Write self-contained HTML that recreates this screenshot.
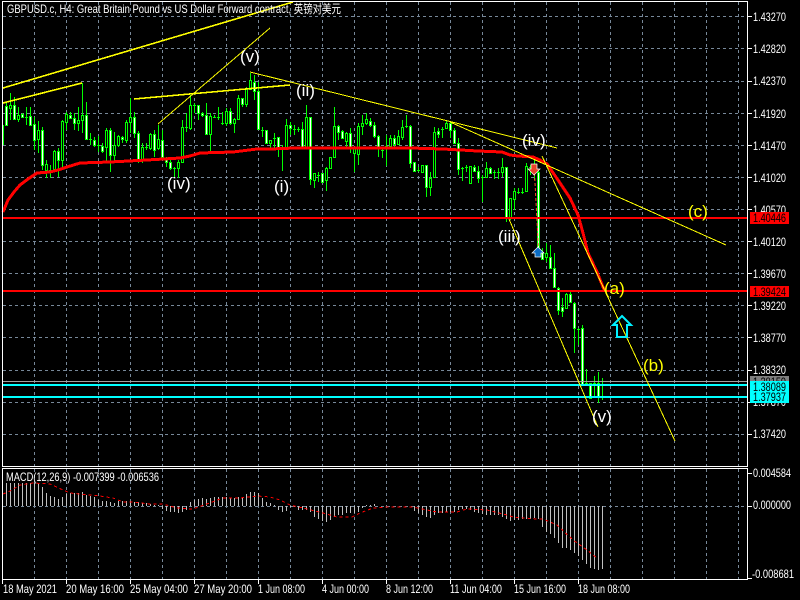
<!DOCTYPE html>
<html><head><meta charset="utf-8"><title>GBPUSD.c, H4</title>
<style>
html,body{margin:0;padding:0;background:#000;width:800px;height:600px;overflow:hidden}
svg{display:block}
text{font-family:"Liberation Sans","Noto Sans CJK SC",sans-serif;font-size:12px;fill:#fff}
.w{font-size:17px}
</style></head><body>
<svg width="800" height="600" viewBox="0 0 800 600" xmlns="http://www.w3.org/2000/svg">
<rect width="800" height="600" fill="#000"/>
<!-- grid -->
<path shape-rendering="crispEdges" stroke="#778899" stroke-width="1" stroke-dasharray="3 3" fill="none" d="M34.5 2V466M66.5 2V466M98.5 2V466M130.5 2V466M162.5 2V466M194.5 2V466M226.5 2V466M258.5 2V466M290.5 2V466M322.5 2V466M354.5 2V466M386.5 2V466M418.5 2V466M450.5 2V466M482.5 2V466M514.5 2V466M546.5 2V466M578.5 2V466M610.5 2V466M642.5 2V466M674.5 2V466M706.5 2V466M738.5 2V466M34.5 469V579M66.5 469V579M98.5 469V579M130.5 469V579M162.5 469V579M194.5 469V579M226.5 469V579M258.5 469V579M290.5 469V579M322.5 469V579M354.5 469V579M386.5 469V579M418.5 469V579M450.5 469V579M482.5 469V579M514.5 469V579M546.5 469V579M578.5 469V579M610.5 469V579M642.5 469V579M674.5 469V579M706.5 469V579M738.5 469V579M3 16.5H747M3 48.5H747M3 81.5H747M3 113.5H747M3 145.5H747M3 177.5H747M3 209.5H747M3 241.5H747M3 273.5H747M3 305.5H747M3 337.5H747M3 370.5H747M3 402.5H747M3 434.5H747M3 506.5H747"/>
<!-- wicks -->
<path shape-rendering="crispEdges" stroke="#00ff00" fill="none" d="M3.5 125V145M6.5 102V125M10.5 93V120M14.5 97V120M18.5 107V122M22.5 113V118M26.5 107V125M30.5 107V125M34.5 117V150M38.5 121V153M42.5 127V170M46.5 160V178M50.5 165V178M54.5 150V170M58.5 148V177M62.5 120V168M66.5 112V130M70.5 112V118M74.5 113V130M78.5 107V131M82.5 83V133M86.5 102V140M90.5 133V145M94.5 137V147M98.5 136V152M102.5 143V153M106.5 128V163M110.5 128V172M114.5 132V163M118.5 135V147M122.5 136V143M126.5 120V143M130.5 98V133M134.5 112V138M138.5 131V163M142.5 143V163M146.5 143V150M150.5 133V150M154.5 130V157M158.5 125V150M162.5 130V160M166.5 157V167M170.5 160V170M174.5 167V178M178.5 160V178M182.5 120V163M186.5 113V132M190.5 95V130M194.5 103V113M198.5 105V120M202.5 112V117M206.5 103V135M210.5 113V153M214.5 115V118M218.5 107V120M222.5 112V125M226.5 108V126M230.5 108V125M234.5 118V133M238.5 95V118M242.5 98V107M246.5 87V107M250.5 73V90M254.5 75V100M258.5 82V130M262.5 127V137M266.5 130V143M270.5 140V150M274.5 133V150M278.5 137V157M282.5 145V171M286.5 119V150M290.5 122V135M294.5 125V135M298.5 127V132M302.5 122V147M306.5 105V147M310.5 117V185M314.5 173V188M318.5 172V182M322.5 173V183M326.5 167V191M330.5 157V168M334.5 107V158M338.5 125V140M342.5 130V138M346.5 132V148M350.5 128V153M354.5 147V172M358.5 123V165M362.5 115V135M366.5 113V125M370.5 118V127M374.5 122V138M378.5 135V157M382.5 148V158M386.5 135V166M390.5 135V147M394.5 135V147M398.5 130V145M402.5 120V140M406.5 115V128M410.5 125V168M414.5 162V172M418.5 167V172M422.5 165V172M426.5 165V197M430.5 172V196M434.5 127V178M438.5 128V138M442.5 127V138M446.5 120V128M450.5 122V138M454.5 128V143M458.5 138V175M462.5 167V181M466.5 165V172M470.5 166V183M474.5 165V172M478.5 166V183M482.5 175V202M486.5 162V178M490.5 167V173M494.5 170V179M498.5 168V179M502.5 158V177M506.5 167V222M510.5 198V220M514.5 188V210M518.5 188V194M522.5 188V194M526.5 163V192M530.5 165V175M534.5 158V180M538.5 170V252M542.5 248V260M546.5 243V262M550.5 245V268M554.5 253V288M558.5 287V315M562.5 298V317M566.5 293V308M570.5 292V303M574.5 302V353M578.5 328V345M582.5 325V386M586.5 369V383M590.5 383V398M594.5 376V398M598.5 372V403M602.5 378V400"/>
<!-- doji bars -->
<path shape-rendering="crispEdges" stroke="#00ff00" fill="none" d="M25 117.5h3M89 139.5h3M97 145.5h3M145 147.5h3M173 168.5h3M185 127.5h3M193 105.5h3M213 117.5h3M217 117.5h3M221 123.5h3M261 130.5h3M273 138.5h3M281 149.5h3M293 129.5h3M297 129.5h3M317 175.5h3M381 150.5h3M385 146.5h3M405 126.5h3M417 170.5h3M441 129.5h3M461 168.5h3M465 167.5h3M481 177.5h3M493 172.5h3M497 172.5h3M517 192.5h3M521 192.5h3M529 167.5h3M533 165.5h3M577 329.5h3M585 383.5h3M593 383.5h3M601 385.5h3"/>
<!-- bull bodies (black) -->
<path shape-rendering="crispEdges" stroke="#00ff00" fill="#000" d="M9.5 105.5h2v3h-2zM17.5 115.5h2v4h-2zM37.5 130.5h2v9h-2zM45.5 164.5h2v6h-2zM53.5 151.5h2v18h-2zM61.5 121.5h2v39h-2zM65.5 114.5h2v8h-2zM77.5 120.5h2v3h-2zM81.5 115.5h2v5h-2zM105.5 130.5h2v17h-2zM113.5 145.5h2v10h-2zM117.5 136.5h2v9h-2zM125.5 122.5h2v18h-2zM129.5 117.5h2v5h-2zM141.5 147.5h2v13h-2zM149.5 134.5h2v14h-2zM157.5 139.5h2v9h-2zM177.5 162.5h2v6h-2zM181.5 127.5h2v35h-2zM189.5 105.5h2v23h-2zM209.5 116.5h2v18h-2zM225.5 111.5h2v12h-2zM233.5 119.5h2v4h-2zM237.5 98.5h2v21h-2zM245.5 89.5h2v15h-2zM249.5 80.5h2v9h-2zM269.5 140.5h2v3h-2zM285.5 125.5h2v24h-2zM305.5 117.5h2v30h-2zM313.5 173.5h2v7h-2zM325.5 168.5h2v12h-2zM329.5 157.5h2v11h-2zM333.5 126.5h2v31h-2zM345.5 133.5h2v8h-2zM353.5 148.5h2v5h-2zM357.5 126.5h2v28h-2zM361.5 123.5h2v3h-2zM365.5 119.5h2v4h-2zM389.5 138.5h2v8h-2zM397.5 136.5h2v8h-2zM401.5 127.5h2v10h-2zM421.5 165.5h2v7h-2zM429.5 178.5h2v9h-2zM433.5 132.5h2v45h-2zM445.5 123.5h2v5h-2zM469.5 166.5h2v17h-2zM485.5 168.5h2v9h-2zM501.5 167.5h2v5h-2zM509.5 198.5h2v19h-2zM513.5 191.5h2v8h-2zM525.5 166.5h2v25h-2zM545.5 253.5h2v4h-2zM565.5 294.5h2v14h-2z"/>
<!-- bear bodies (white) -->
<path shape-rendering="crispEdges" stroke="#00ff00" fill="#fff" d="M5.5 106.5h2v19h-2zM13.5 105.5h2v14h-2zM21.5 114.5h2v3h-2zM29.5 116.5h2v9h-2zM33.5 124.5h2v16h-2zM41.5 130.5h2v35h-2zM49.5 170.5h2v2h-2zM57.5 151.5h2v9h-2zM69.5 115.5h2v3h-2zM73.5 118.5h2v5h-2zM85.5 115.5h2v24h-2zM93.5 140.5h2v5h-2zM101.5 146.5h2v5h-2zM109.5 130.5h2v25h-2zM121.5 137.5h2v2h-2zM133.5 117.5h2v16h-2zM137.5 133.5h2v26h-2zM153.5 134.5h2v16h-2zM161.5 140.5h2v17h-2zM165.5 158.5h2v4h-2zM169.5 162.5h2v6h-2zM197.5 105.5h2v8h-2zM201.5 113.5h2v2h-2zM205.5 115.5h2v19h-2zM229.5 111.5h2v12h-2zM241.5 98.5h2v6h-2zM253.5 82.5h2v9h-2zM257.5 91.5h2v38h-2zM265.5 130.5h2v13h-2zM277.5 137.5h2v11h-2zM289.5 125.5h2v3h-2zM301.5 129.5h2v18h-2zM309.5 117.5h2v62h-2zM321.5 173.5h2v9h-2zM337.5 126.5h2v6h-2zM341.5 131.5h2v7h-2zM349.5 133.5h2v15h-2zM369.5 121.5h2v4h-2zM373.5 125.5h2v11h-2zM377.5 136.5h2v11h-2zM393.5 138.5h2v6h-2zM409.5 126.5h2v37h-2zM413.5 162.5h2v9h-2zM425.5 165.5h2v22h-2zM437.5 131.5h2v3h-2zM449.5 123.5h2v7h-2zM453.5 130.5h2v13h-2zM457.5 143.5h2v26h-2zM473.5 167.5h2v4h-2zM477.5 171.5h2v7h-2zM489.5 168.5h2v5h-2zM505.5 167.5h2v50h-2zM537.5 172.5h2v78h-2zM541.5 252.5h2v7h-2zM549.5 257.5h2v11h-2zM553.5 268.5h2v19h-2zM557.5 288.5h2v22h-2zM561.5 307.5h2v4h-2zM569.5 294.5h2v8h-2zM573.5 303.5h2v25h-2zM581.5 328.5h2v57h-2zM589.5 383.5h2v15h-2zM597.5 383.5h2v14h-2z"/>
<!-- price lines -->
<rect x="3" y="217" width="744" height="2" fill="#ff0000"/>
<rect x="3" y="290" width="744" height="2" fill="#ff0000"/>
<rect x="3" y="381" width="744" height="1" fill="#a0a0a0"/>
<rect x="3" y="384" width="744" height="2" fill="#00ffff"/>
<rect x="3" y="396" width="744" height="2" fill="#00ffff"/>
<!-- MA -->
<polyline shape-rendering="crispEdges" fill="none" stroke="#ff0000" stroke-width="3" stroke-linejoin="round" points="3,212 8,200 14,192 20,185 28,179 37,173 50,172 58,170 67,167 80,163 110,162 147,160 180,158 190,156 200,153 233,152 257,149 270,149 295,148 367,148 410,148 443,149 478,151 502,152 510,155 518,156 533,157 540,160 547,164 558,180 570,198 578,215 583,233 588,253 597,272 603,287 605,291"/>
<!-- yellow trend lines -->
<g fill="none" stroke="#ffff00" shape-rendering="crispEdges">
<path stroke-width="1.6" d="M3 88L293 2M3 103L82 83M134 99L290 85"/>
<path stroke-width="1" d="M158 124L270 28M250 72L557 148M450 122L726 245M509 219L598 427M542 156L675 441"/>
</g>
<!-- trade markers -->
<path stroke="#ff5030" stroke-width="1" stroke-dasharray="3 2" fill="none" d="M534.5 173L538.5 250"/>
<path d="M531 164h6v5h3l-6 6-6-6h3z" fill="#e8442a" stroke="#fff" stroke-width=".7"/>
<path d="M538 247l6 6h-3v4h-6v-4h-3z" fill="#0a6cc4" stroke="#fff" stroke-width=".7"/>
<!-- cyan arrow -->
<path d="M622 316L631 325H627V337H617V325H613Z" fill="none" stroke="#00f0ff" stroke-width="2"/>
<!-- wave labels -->
<text class="w" x="240" y="62">(v)</text>
<text class="w" x="167" y="189">(iv)</text>
<text class="w" x="296" y="96">(ii)</text>
<text class="w" x="274" y="192">(i)</text>
<text class="w" x="498" y="242">(iii)</text>
<text class="w" x="522" y="146">(iv)</text>
<text class="w" x="592" y="422">(v)</text>
<text class="w" x="688" y="217" style="fill:#ffff00">(c)</text>
<text class="w" x="604" y="294" style="fill:#ffff00">(a)</text>
<text class="w" x="643" y="371" style="fill:#ffff00">(b)</text>
<!-- frames -->
<rect x="2.5" y="1.5" width="745" height="465" fill="none" stroke="#fff" shape-rendering="crispEdges"/>
<rect x="2.5" y="468.5" width="745" height="111" fill="none" stroke="#fff" shape-rendering="crispEdges"/>
<!-- MACD histogram -->
<path shape-rendering="crispEdges" stroke="#c0c0c0" fill="none" d="M6.5 483V506M10.5 483V506M14.5 483V506M18.5 483V506M22.5 483V506M26.5 483V506M30.5 483V506M34.5 483V506M38.5 483V506M42.5 487V506M46.5 493V506M50.5 496V506M54.5 497V506M58.5 499V506M62.5 497V506M66.5 494V506M70.5 493V506M74.5 493V506M78.5 493V506M82.5 492V506M86.5 495V506M90.5 496V506M94.5 497V506M98.5 500V506M102.5 501V506M106.5 501V506M110.5 502V506M114.5 503V506M118.5 501V506M122.5 501V506M126.5 501V506M130.5 501V506M134.5 502V506M138.5 502V506M142.5 503V506M146.5 503V506M150.5 504V506M154.5 505V506M158.5 505V506M162.5 506V509M166.5 506V511M170.5 506V512M174.5 506V512M178.5 506V513M182.5 506V512M186.5 506V510M190.5 502V506M194.5 500V506M198.5 499V506M202.5 498V506M206.5 499V506M210.5 498V506M214.5 497V506M218.5 497V506M222.5 497V506M226.5 497V506M230.5 498V506M234.5 498V506M238.5 497V506M242.5 497V506M246.5 494V506M250.5 492V506M254.5 492V506M258.5 493V506M262.5 498V506M266.5 502V506M270.5 503V506M274.5 505V506M278.5 506V510M282.5 506V512M286.5 506V511M290.5 506V507M294.5 506V507M298.5 506V510M302.5 506V510M306.5 506V510M310.5 506V512M314.5 506V517M318.5 506V519M322.5 506V521M326.5 506V522M330.5 506V520M334.5 506V517M338.5 506V515M342.5 506V515M346.5 506V513M350.5 506V513M354.5 506V513M358.5 506V512M362.5 506V508M366.5 505V506M370.5 505V506M374.5 504V506M414.5 506V511M418.5 506V513M422.5 506V515M426.5 506V517M430.5 506V518M434.5 506V515M438.5 506V513M442.5 506V513M446.5 506V512M450.5 506V512M454.5 506V512M458.5 506V510M462.5 506V509M466.5 506V509M470.5 506V510M474.5 506V512M478.5 506V513M482.5 506V514M486.5 506V515M490.5 506V515M494.5 506V515M498.5 506V515M502.5 506V517M506.5 506V519M510.5 506V521M514.5 506V520M518.5 506V520M522.5 506V519M526.5 506V519M530.5 506V519M534.5 506V518M538.5 506V519M542.5 506V527M546.5 506V532M550.5 506V534M554.5 506V538M558.5 506V543M562.5 506V548M566.5 506V548M570.5 506V550M574.5 506V553M578.5 506V556M582.5 506V560M586.5 506V564M590.5 506V568M594.5 506V569M598.5 506V570M602.5 506V569"/>
<polyline shape-rendering="crispEdges" fill="none" stroke="#ff0000" stroke-dasharray="3 3" points="3,494 10,491 20,485 33,483 50,484 63,490 70,493 100,496 113,498 123,502 133,502 150,504 163,504 177,508 193,509 207,504 223,498 240,498 257,496 270,497 280,500 290,505 307,509 323,513 337,517 352,517 360,513 373,508 390,507 413,507 427,510 437,512 457,512 467,509 487,510 507,515 513,517 537,519 543,519 557,525 573,540 587,550 598,559"/>
<!-- axis ticks -->
<path shape-rendering="crispEdges" stroke="#fff" fill="none" d="M748 16.5h4M748 48.5h4M748 81.5h4M748 113.5h4M748 145.5h4M748 177.5h4M748 209.5h4M748 241.5h4M748 273.5h4M748 305.5h4M748 337.5h4M748 370.5h4M748 402.5h4M748 434.5h4M748 473.5h4M748 506.5h4M748 578.5h4M2.5 580v4M66.5 580v4M130.5 580v4M194.5 580v4M258.5 580v4M322.5 580v4M386.5 580v4M450.5 580v4M514.5 580v4M578.5 580v4"/>
<!-- title -->
<text x="7" y="13" textLength="334" lengthAdjust="spacingAndGlyphs">GBPUSD.c, H4:  Great Britain Pound vs US Dollar Forward contract, 英镑对美元</text>
<text x="6" y="481" textLength="153" lengthAdjust="spacingAndGlyphs">MACD(12,26,9) -0.007399 -0.006536</text>
<!-- price axis -->
<g>
<text x="753" y="21" textLength="33" lengthAdjust="spacingAndGlyphs">1.43270</text>
<text x="753" y="53" textLength="33" lengthAdjust="spacingAndGlyphs">1.42820</text>
<text x="753" y="85" textLength="33" lengthAdjust="spacingAndGlyphs">1.42370</text>
<text x="753" y="118" textLength="33" lengthAdjust="spacingAndGlyphs">1.41920</text>
<text x="753" y="150" textLength="33" lengthAdjust="spacingAndGlyphs">1.41470</text>
<text x="753" y="182" textLength="33" lengthAdjust="spacingAndGlyphs">1.41020</text>
<text x="753" y="214" textLength="33" lengthAdjust="spacingAndGlyphs">1.40570</text>
<text x="753" y="246" textLength="33" lengthAdjust="spacingAndGlyphs">1.40120</text>
<text x="753" y="278" textLength="33" lengthAdjust="spacingAndGlyphs">1.39670</text>
<text x="753" y="310" textLength="33" lengthAdjust="spacingAndGlyphs">1.39220</text>
<text x="753" y="342" textLength="33" lengthAdjust="spacingAndGlyphs">1.38770</text>
<text x="753" y="374" textLength="33" lengthAdjust="spacingAndGlyphs">1.38320</text>
<text x="753" y="406" textLength="33" lengthAdjust="spacingAndGlyphs">1.37870</text>
<text x="753" y="438" textLength="33" lengthAdjust="spacingAndGlyphs">1.37420</text>
<rect x="750" y="212" width="39" height="12" fill="#ff0000"/>
<text x="753" y="222" textLength="33" lengthAdjust="spacingAndGlyphs" style="fill:#000">1.40446</text>
<rect x="750" y="286" width="39" height="11" fill="#ff0000"/>
<text x="753" y="296" textLength="33" lengthAdjust="spacingAndGlyphs" style="fill:#000">1.39424</text>
<rect x="750" y="376" width="39" height="6" fill="#808080"/>
<text x="753" y="386" textLength="33" lengthAdjust="spacingAndGlyphs" style="fill:#000">1.38159</text>
<rect x="750" y="381" width="39" height="22" fill="#00ffff"/>
<text x="753" y="391" textLength="33" lengthAdjust="spacingAndGlyphs" style="fill:#000">1.38089</text>
<text x="753" y="401" textLength="33" lengthAdjust="spacingAndGlyphs" style="fill:#000">1.37937</text>
<text x="753" y="477" textLength="38" lengthAdjust="spacingAndGlyphs">0.004584</text>
<text x="753" y="509" textLength="38" lengthAdjust="spacingAndGlyphs">0.000000</text>
<text x="752" y="578" textLength="42" lengthAdjust="spacingAndGlyphs">-0.008681</text>
</g>
<!-- time axis -->
<g>
<text x="3" y="593" textLength="54" lengthAdjust="spacingAndGlyphs">18 May 2021</text>
<text x="66" y="593" textLength="58" lengthAdjust="spacingAndGlyphs">20 May 16:00</text>
<text x="130" y="593" textLength="58" lengthAdjust="spacingAndGlyphs">25 May 04:00</text>
<text x="194" y="593" textLength="58" lengthAdjust="spacingAndGlyphs">27 May 20:00</text>
<text x="258" y="593" textLength="47" lengthAdjust="spacingAndGlyphs">1 Jun 08:00</text>
<text x="322" y="593" textLength="47" lengthAdjust="spacingAndGlyphs">4 Jun 00:00</text>
<text x="386" y="593" textLength="47" lengthAdjust="spacingAndGlyphs">8 Jun 12:00</text>
<text x="450" y="593" textLength="52" lengthAdjust="spacingAndGlyphs">11 Jun 04:00</text>
<text x="514" y="593" textLength="52" lengthAdjust="spacingAndGlyphs">15 Jun 16:00</text>
<text x="578" y="593" textLength="52" lengthAdjust="spacingAndGlyphs">18 Jun 08:00</text>
</g>
</svg>
</body></html>
